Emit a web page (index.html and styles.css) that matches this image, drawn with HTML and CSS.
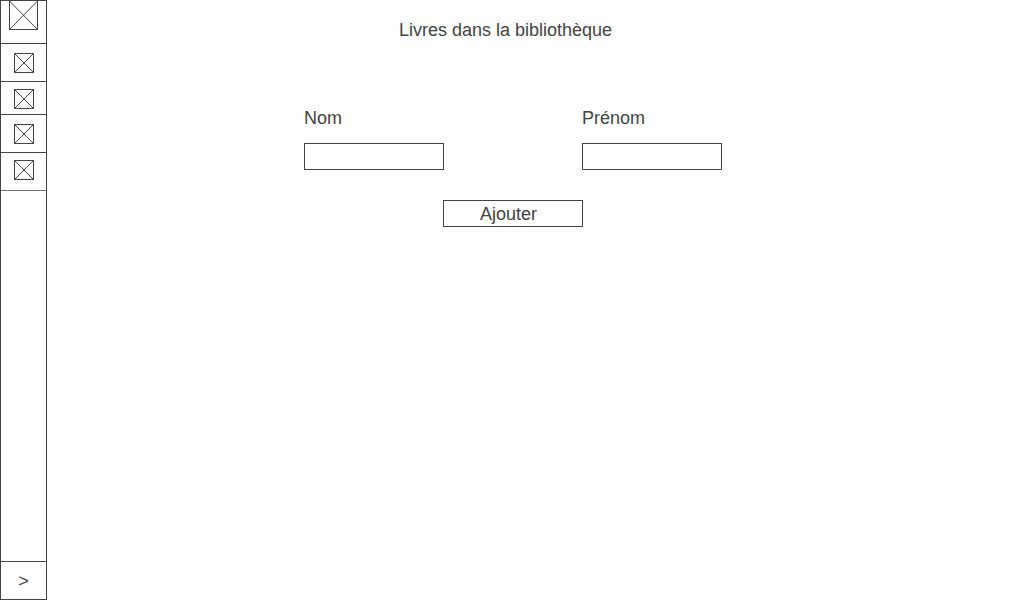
FILE: index.html
```html
<!DOCTYPE html>
<html lang="fr">
<head>
<meta charset="utf-8">
<meta name="viewport" content="width=device-width, initial-scale=1">
<title>Livres dans la bibliothèque</title>
<link rel="stylesheet" href="styles.css">
</head>
<body>
<div class="app">
  <nav class="sidebar" aria-label="Navigation">
    <a class="brand" href="#" aria-label="Accueil">
      <svg class="brand-icon" viewBox="0 0 29 29" aria-hidden="true"><path class="edge" d="M.5 0V28.5H28.5V0"/><path class="cross" d="M.5 0L28.5 28.5M28.5 0L.5 28.5"/></svg>
    </a>
    <a class="item item-low" href="#" aria-label="Rubrique 1">
      <svg class="icon" viewBox="0 0 20 20" aria-hidden="true"><path class="edge" d="M.5 .5H19.5V19.5H.5ZM.5 .5L19.5 19.5M19.5 .5L.5 19.5"/></svg>
    </a>
    <a class="item item-short" href="#" aria-label="Rubrique 2">
      <svg class="icon" viewBox="0 0 20 20" aria-hidden="true"><path class="edge" d="M.5 .5H19.5V19.5H.5ZM.5 .5L19.5 19.5M19.5 .5L.5 19.5"/></svg>
    </a>
    <a class="item item-low" href="#" aria-label="Rubrique 3">
      <svg class="icon" viewBox="0 0 20 20" aria-hidden="true"><path class="edge" d="M.5 .5H19.5V19.5H.5ZM.5 .5L19.5 19.5M19.5 .5L.5 19.5"/></svg>
    </a>
    <a class="item item-last" href="#" aria-label="Rubrique 4">
      <svg class="icon" viewBox="0 0 20 20" aria-hidden="true"><path class="edge" d="M.5 .5H19.5V19.5H.5ZM.5 .5L19.5 19.5M19.5 .5L.5 19.5"/></svg>
    </a>
    <button class="expand" type="button">&gt;</button>
  </nav>
  <main class="content">
    <h1 class="title">Livres dans la bibliothèque</h1>
    <form class="form">
      <div class="fields">
        <div class="field">
          <label class="label" for="nom">Nom</label>
          <input class="input" id="nom" type="text">
        </div>
        <div class="field">
          <label class="label" for="prenom">Prénom</label>
          <input class="input" id="prenom" type="text">
        </div>
      </div>
      <button class="submit" type="button">Ajouter</button>
    </form>
  </main>
</div>
</body>
</html>
```

FILE: styles.css
```css
* {
  box-sizing: border-box;
}

body {
  margin: 0;
  background: #fefefe;
  color: #434343;
  font: 18px/20px "Liberation Sans", Arial, sans-serif;
}

button,
input {
  margin: 0;
  border: 1px solid #434343;
  border-radius: 0;
  background: #fefefe;
  color: inherit;
  font: inherit;
}

.app {
  display: flex;
  min-height: 100vh;
}

.sidebar {
  display: flex;
  flex: none;
  flex-direction: column;
  width: 47px;
  border: 1px solid #434343;
}

.brand,
.item {
  display: flex;
  justify-content: center;
  align-items: flex-start;
  border-bottom: 1px solid #434343;
}

.brand {
  height: 43px;
  padding-right: 1px;
}

.item {
  height: 38px;
  padding: 7px 0 0 1px;
}

.item-low {
  padding-top: 9px;
}

.item-short {
  height: 33px;
}

.item-last {
  border-color: #777;
}

.brand-icon {
  width: 29px;
  height: 29px;
}

.icon {
  width: 20px;
  height: 20px;
}

.edge,
.cross {
  fill: none;
  stroke: #434343;
}

.expand {
  height: 38px;
  margin-top: auto;
  padding: 0;
  border-width: 1px 0 0;
}

.content {
  flex: 1;
  padding: 20px 45px 20px 0;
}

.title {
  margin: 0;
  padding-right: 15px;
  font-size: 18px;
  font-weight: 400;
  text-align: center;
}

.form {
  display: flex;
  flex-direction: column;
  align-items: center;
  gap: 30px;
  margin-top: 68px;
}

.fields {
  display: flex;
  gap: 138px;
}

.field {
  display: flex;
  flex-direction: column;
  gap: 15px;
  width: 140px;
}

.input {
  width: 100%;
  height: 27px;
  padding: 0 6px;
}

.submit {
  width: 140px;
  height: 27px;
  padding: 0 9px 0 0;
}
```
